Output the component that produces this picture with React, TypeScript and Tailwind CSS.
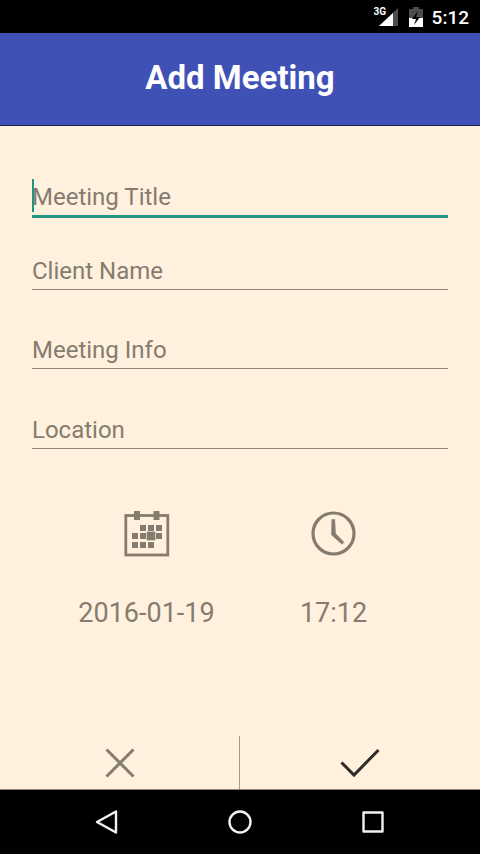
import { useState } from 'react';

const FIELDS = [
  { id: 'title', label: 'Meeting Title', margin: '' },
  { id: 'client', label: 'Client Name', margin: 'mt-[34px]' },
  { id: 'info', label: 'Meeting Info', margin: 'mt-[41px]' },
  { id: 'location', label: 'Location', margin: 'mt-[42px]' },
];

const CALENDAR_CELLS = [
  [16, 14], [24, 14], [32, 14],
  [8, 22], [16, 22], [32, 22],
  [8, 31], [16, 31], [24, 31],
];

function StatusBar() {
  return (
    <div className="flex h-[33px] items-center justify-end bg-black pr-[11px] text-white">
      <div className="relative mr-[11px] h-[18px] w-[24px]">
        <svg className="ml-auto" width="19" height="18" viewBox="0 0 19 18">
          <path d="M0 18 19 0V18Z" fill="#4d4d4d" />
          <path d="M0 18 14 5V18Z" fill="#fff" />
        </svg>
        <span className="absolute top-[-2px] left-0 text-[10px] leading-[11px] font-bold">3G</span>
      </div>
      <svg className="mr-[9px]" width="14" height="20" viewBox="0 0 14 20">
        <path d="M4 0h6v2h4v9H0V2h4Z" fill="#4d4d4d" />
        <path d="M0 11h14v9H0Z" fill="#fff" />
        <path d="M9 4 3 12h4l-2 6 6-8H7Z" fill="#000" />
      </svg>
      <span className="pt-[3px] text-[19px] leading-[24px] font-medium">5:12</span>
    </div>
  );
}

function CalendarIcon() {
  return (
    <svg width="46" height="46" viewBox="0 0 46 46" fill="#857c70">
      <rect x="1.8" y="4.5" width="42" height="39.5" fill="none" stroke="#857c70" strokeWidth="2.8" />
      <rect x="10" y="0" width="6" height="9" />
      <rect x="29.5" y="0" width="6" height="9" />
      {CALENDAR_CELLS.map(([x, y]) => (
        <rect key={`${x}-${y}`} x={x} y={y} width="6" height="6" />
      ))}
      <rect x="22.7" y="20.7" width="8.6" height="8.6" />
    </svg>
  );
}

function ClockIcon() {
  return (
    <svg width="46" height="46" viewBox="0 0 46 46" fill="none" stroke="#857c70">
      <circle cx="22.5" cy="22.5" r="20.5" strokeWidth="3.2" />
      <path d="M20.8 8.5h3l.7 14 8.5 8.8-2 2L20.5 24Z" fill="#857c70" strokeWidth=".5" />
    </svg>
  );
}

export default function App() {
  const [values, setValues] = useState<Record<string, string>>({});

  return (
    <div className="flex min-h-screen flex-col bg-[#fff1de] font-['Roboto',sans-serif]">
      <StatusBar />
      <header className="flex h-[93px] items-center justify-center border-b border-[#1c2350] bg-[#3f51b5]">
        <h1 className="pb-[2px] text-[33px] leading-[40px] font-bold text-white">Add Meeting</h1>
      </header>

      <form className="flex flex-1 flex-col" onSubmit={e => e.preventDefault()}>
        <div className="px-8 pt-[53px]">
          {FIELDS.map((field, i) => (
            <div key={field.id} className={`relative ${field.margin}`}>
              <input
                id={field.id}
                type="text"
                aria-label={field.label}
                placeholder={field.label}
                value={values[field.id] ?? ''}
                onChange={e => setValues({ ...values, [field.id]: e.target.value })}
                className={`block w-full bg-transparent text-[24px] leading-[36px] text-[#4a443c] outline-none placeholder:text-[#857c70] ${
                  i === 0 ? 'h-[39px] border-b-3 border-[#229682] caret-transparent' : 'h-[38px] border-b border-[#8f867a]'
                }`}
              />
              {i === 0 && <span className="absolute top-0 left-0 h-[33px] w-[2px] bg-[#229682]" />}
            </div>
          ))}
        </div>

        <div className="mt-[62px] grid grid-cols-2 px-[53px] text-[27px] leading-[32px] text-[#857c70]">
          <button type="button" className="flex flex-col items-center gap-10">
            <CalendarIcon />
            <span>2016-01-19</span>
          </button>
          <button type="button" className="flex flex-col items-center gap-10">
            <ClockIcon />
            <span>17:12</span>
          </button>
        </div>

        <div className="mt-auto grid h-[54px] grid-cols-2 border-b border-[#8f867a]">
          <button type="button" aria-label="Cancel" className="flex items-center justify-center border-r border-[#a39a8e]">
            <svg width="30" height="30" viewBox="0 0 30 30" fill="none" stroke="#857c70" strokeWidth="3">
              <path d="M1.5 1.5 28.5 28.5M28.5 1.5 1.5 28.5" />
            </svg>
          </button>
          <button type="submit" aria-label="Save" className="flex items-center justify-center">
            <svg width="40" height="30" viewBox="0 0 40 30" fill="none" stroke="#2f2b26" strokeWidth="3">
              <path d="M1.5 14.5 14 27 38.5 2" />
            </svg>
          </button>
        </div>
      </form>

      <nav className="grid h-16 grid-cols-3 bg-black px-10">
        <button type="button" aria-label="Back" className="flex items-center justify-center">
          <svg width="24" height="26" viewBox="0 0 24 26" fill="none" stroke="#f2f2f2" strokeWidth="2.4" strokeLinejoin="round">
            <path d="M21 2.5V23.5L2 13Z" />
          </svg>
        </button>
        <button type="button" aria-label="Home" className="flex items-center justify-center">
          <svg width="24" height="24" viewBox="0 0 24 24" fill="none" stroke="#f2f2f2" strokeWidth="2.4">
            <circle cx="12" cy="12" r="10.5" />
          </svg>
        </button>
        <button type="button" aria-label="Recent apps" className="flex items-center justify-center">
          <svg width="22" height="22" viewBox="0 0 22 22" fill="none" stroke="#f2f2f2" strokeWidth="2.4" strokeLinejoin="round">
            <rect x="1.5" y="1.5" width="19" height="19" />
          </svg>
        </button>
      </nav>
    </div>
  );
}
